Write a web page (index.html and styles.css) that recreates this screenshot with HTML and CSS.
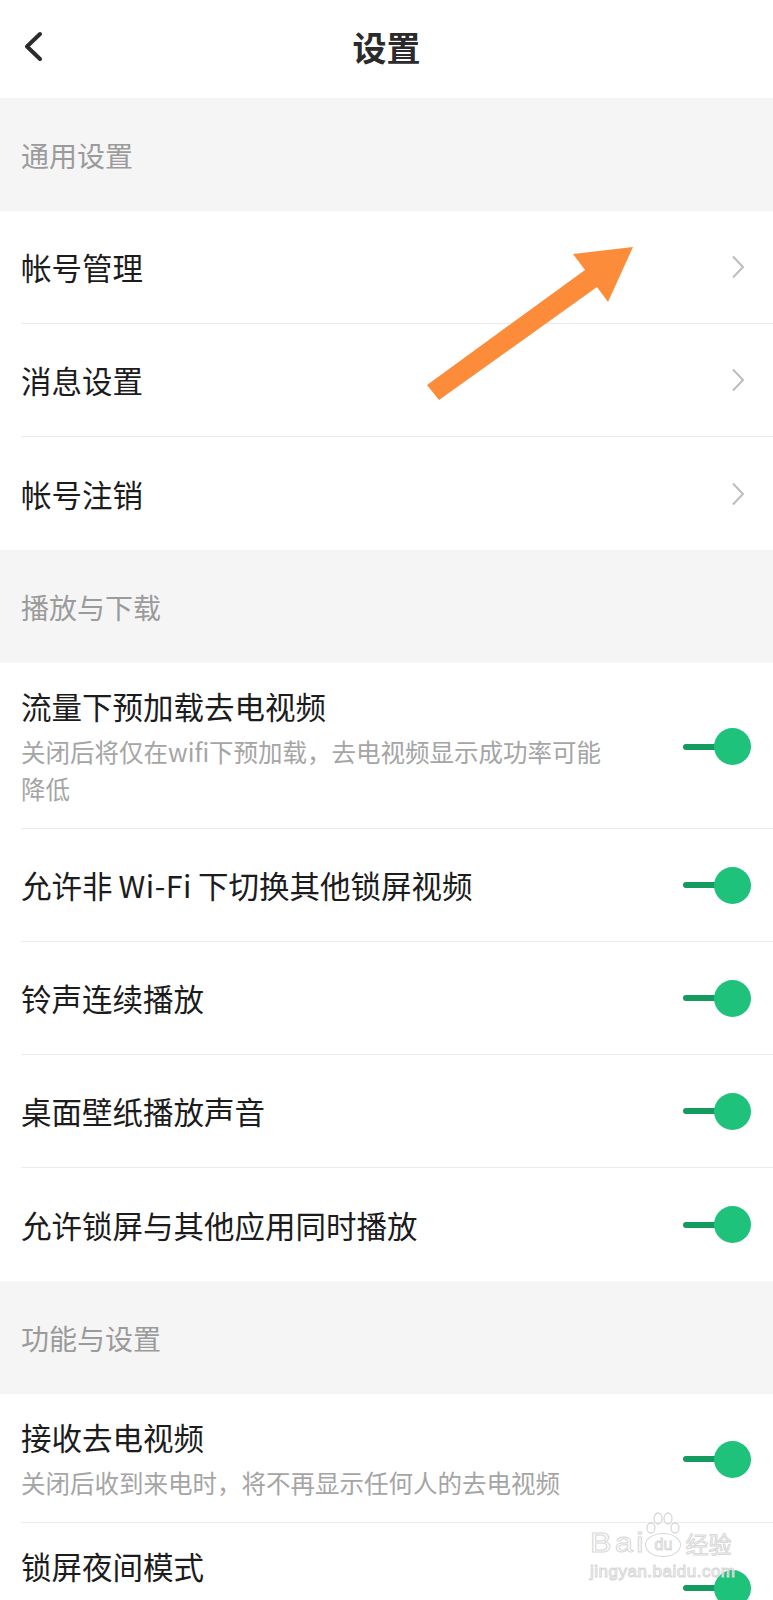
FILE: index.html
```html
<!DOCTYPE html>
<html lang="zh-CN">
<head>
  <meta charset="UTF-8">
  <meta name="viewport" content="width=device-width, initial-scale=1.0">
  <title>设置</title>
  <link rel="stylesheet" href="styles.css">
</head>
<body>
  <div class="page">
    <header class="nav">
      <a class="back" href="#">
        <svg width="20" height="32" viewBox="0 0 20 32">
          <polyline points="16,3 3,15.5 16,28" fill="none" stroke="#2b2b2b" stroke-width="4" stroke-linecap="round" stroke-linejoin="round"/>
        </svg>
      </a>
      <h1>设置</h1>
      <span></span>
    </header>

    <!-- 通用设置 -->
    <div class="group-title">通用设置</div>
    <ul class="list">
      <li class="item">
        <span class="label">帐号管理</span>
        <svg class="more" width="14" height="24" viewBox="0 0 14 24"><polyline points="2,1.5 12,12 2,22.5" fill="none" stroke="#bdbdbd" stroke-width="2"/></svg>
      </li>
      <li class="item">
        <span class="label">消息设置</span>
        <svg class="more" width="14" height="24" viewBox="0 0 14 24"><polyline points="2,1.5 12,12 2,22.5" fill="none" stroke="#bdbdbd" stroke-width="2"/></svg>
      </li>
      <li class="item">
        <span class="label">帐号注销</span>
        <svg class="more" width="14" height="24" viewBox="0 0 14 24"><polyline points="2,1.5 12,12 2,22.5" fill="none" stroke="#bdbdbd" stroke-width="2"/></svg>
      </li>
    </ul>

    <!-- 播放与下载 -->
    <div class="group-title">播放与下载</div>
    <ul class="list">
      <li class="item has-sub">
        <div class="text">
          <div class="label">流量下预加载去电视频</div>
          <div class="sub">关闭后将仅在wifi下预加载，去电视频显示成功率可能降低</div>
        </div>
        <span class="switch"><span class="track"></span><span class="knob"></span></span>
      </li>
      <li class="item">
        <span class="label">允许非<span class="latin">Wi-Fi</span>下切换其他锁屏视频</span>
        <span class="switch"><span class="track"></span><span class="knob"></span></span>
      </li>
      <li class="item">
        <span class="label">铃声连续播放</span>
        <span class="switch"><span class="track"></span><span class="knob"></span></span>
      </li>
      <li class="item">
        <span class="label">桌面壁纸播放声音</span>
        <span class="switch"><span class="track"></span><span class="knob"></span></span>
      </li>
      <li class="item">
        <span class="label">允许锁屏与其他应用同时播放</span>
        <span class="switch"><span class="track"></span><span class="knob"></span></span>
      </li>
    </ul>

    <!-- 功能与设置 -->
    <div class="group-title">功能与设置</div>
    <ul class="list">
      <li class="item has-sub">
        <div class="text">
          <div class="label">接收去电视频</div>
          <div class="sub">关闭后收到来电时，将不再显示任何人的去电视频</div>
        </div>
        <span class="switch"><span class="track"></span><span class="knob"></span></span>
      </li>
      <li class="item has-sub tall">
        <div class="text">
          <div class="label">锁屏夜间模式</div>
        </div>
        <span class="switch"><span class="track"></span><span class="knob"></span></span>
      </li>
    </ul>

    <!-- annotation arrow drawn over the screenshot -->
    <svg class="annot" width="773" height="1600" viewBox="0 0 773 1600">
      <polygon points="427,385 585,270 573,254 633,247 608,302 597,287 439,400" fill="#fd8c3a"/>
    </svg>

    <div class="watermark">
      <div class="wm-top">
        <span class="wm-bai">Bai</span>
        <span class="wm-du">
          <svg class="paw" width="36" height="24" viewBox="0 0 36 24">
            <g fill="none" stroke="#d8d8d8" stroke-width="1.3">
              <ellipse cx="6" cy="16" rx="4" ry="5"/>
              <ellipse cx="13" cy="6.5" rx="4" ry="5.5"/>
              <ellipse cx="23" cy="6.5" rx="4" ry="5.5"/>
              <ellipse cx="30" cy="16" rx="4" ry="5"/>
            </g>
          </svg>
          <span class="wm-circle">du</span>
        </span>
        <span class="wm-cn">经验</span>
      </div>
      <div class="wm-url">jingyan.baidu.com</div>
    </div>
  </div>
</body>
</html>
```

FILE: styles.css
```css
body {
  margin: 0;
  font-family: "Noto Sans CJK SC", "Noto Sans", sans-serif;
  background-color: #fff;
  color: #1c1c1c;
}
.page {
  position: relative;
  overflow: hidden;
}
.nav {
  display: grid;
  grid-template-columns: 80px 1fr 80px;
  align-items: center;
  height: 98px;
  box-sizing: border-box;
  padding-bottom: 5px;
}
.back {
  display: flex;
  padding-left: 24px;
}
.nav h1 {
  margin: 0;
  text-align: center;
  font-size: 34px;
  font-weight: 700;
  line-height: 1;
  color: #2b2b2b;
}
.group-title {
  display: flex;
  align-items: center;
  height: 113px;
  padding-left: 21px;
  background-color: #f5f5f5;
  color: #9b9b9b;
  font-size: 28px;
}
.list {
  list-style: none;
  margin: 0;
  padding: 0;
}
.item {
  display: flex;
  align-items: center;
  justify-content: space-between;
  min-height: 113px;
  box-sizing: border-box;
  margin-left: 21px;
  padding-right: 22px;
  border-bottom: 1px solid #ececec;
}
.item:last-child {
  border-bottom: none;
}
.label {
  font-size: 30.5px;
  line-height: 40px;
  color: #1c1c1c;
}
.latin {
  margin: 0 6px;
  letter-spacing: 0.5px;
}
.item.has-sub {
  padding-top: 23px;
  padding-bottom: 21px;
}
.item.tall {
  min-height: 128px;
}
.has-sub .text {
  align-self: flex-start;
}
.sub {
  margin-top: 7px;
  max-width: 588px;
  font-size: 24.5px;
  line-height: 37px;
  color: #a5a5a5;
}
.more {
  margin-right: 6px;
}
.switch {
  display: flex;
  align-items: center;
}
.switch .track {
  width: 36px;
  height: 6px;
  border-radius: 3px;
  background-color: #159b5f;
}
.switch .knob {
  width: 37px;
  height: 37px;
  margin-left: -5px;
  border-radius: 50%;
  background-color: #1fc27a;
}
.annot {
  position: absolute;
  top: 0;
  left: 0;
  pointer-events: none;
}
.watermark {
  position: absolute;
  left: 590px;
  top: 1512px;
  pointer-events: none;
  font-family: "Liberation Sans", sans-serif;
  color: rgba(255, 255, 255, 0.6);
  -webkit-text-stroke: 1px #d8d8d8;
}
.wm-top {
  display: flex;
  align-items: flex-end;
}
.wm-bai {
  font-size: 28px;
  line-height: 28px;
  letter-spacing: 3px;
  transform: scaleX(1.15);
  transform-origin: left;
  margin-right: 6px;
}
.wm-du {
  display: flex;
  flex-direction: column;
  align-items: center;
}
.wm-circle {
  display: flex;
  align-items: center;
  justify-content: center;
  width: 34px;
  height: 22px;
  border: 1.3px solid #d8d8d8;
  border-radius: 50%;
  font-size: 16px;
  line-height: 1;
}
.paw {
  margin-bottom: -3px;
}
.wm-cn {
  margin-left: 4px;
  font-family: "Noto Sans CJK SC", sans-serif;
  font-size: 23px;
  line-height: 28px;
}
.wm-url {
  margin-top: 5px;
  font-size: 17px;
  line-height: 20px;
  letter-spacing: 0.5px;
}
```
